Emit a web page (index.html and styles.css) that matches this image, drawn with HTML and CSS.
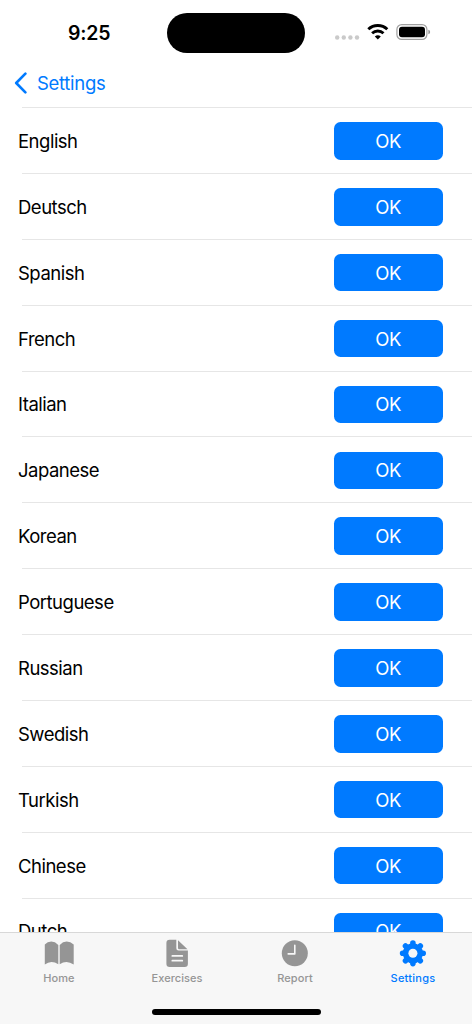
FILE: index.html
```html
<!DOCTYPE html>
<html lang="en">
<head>
<meta charset="utf-8">
<title>Settings</title>
<link rel="stylesheet" href="styles.css">
</head>
<body>
<div class="screen">
  <header class="status">
    <time class="clock">9:25</time>
    <div class="island"></div>
    <svg class="indicators" width="98" height="20" viewBox="0 0 98 20">
      <g fill="#cacaca"><circle cx="3.2" cy="14.5" r="2.2"/><circle cx="9.8" cy="14.5" r="2.2"/><circle cx="16.4" cy="14.5" r="2.2"/><circle cx="23" cy="14.5" r="2.2"/></g>
      <g fill="none" stroke="#000" stroke-width="2.9">
        <path d="M34.3 6.3a13.8 13.8 0 0 1 19 0"/>
        <path d="M38.1 10.2a8.4 8.4 0 0 1 11.4 0"/>
      </g>
      <path d="M43.8 16.6l-3-3a4.4 4.4 0 0 1 6 0z"/>
      <rect x="62.9" y="1.6" width="30" height="14.8" rx="4.8" fill="none" stroke="#a0a0a0" stroke-width="1.2"/>
      <rect x="65" y="3.8" width="26" height="10.4" rx="3"/>
      <path d="M94.4 6.7q1.7.5 1.7 2.3t-1.7 2.3z" fill="#909090"/>
    </svg>
  </header>
  <nav class="navbar">
    <svg width="14" height="22" viewBox="0 0 14 22"><path d="M11.4 1.7L2.2 11l9.2 9.3" fill="none" stroke="#007aff" stroke-width="2.6" stroke-linecap="round" stroke-linejoin="round"/></svg>
    <a class="back">Settings</a>
  </nav>
  <main class="list">
    <div class="row"><span>English</span><button class="ok">OK</button></div>
    <div class="row"><span>Deutsch</span><button class="ok">OK</button></div>
    <div class="row"><span>Spanish</span><button class="ok">OK</button></div>
    <div class="row"><span>French</span><button class="ok">OK</button></div>
    <div class="row"><span>Italian</span><button class="ok">OK</button></div>
    <div class="row"><span>Japanese</span><button class="ok">OK</button></div>
    <div class="row"><span>Korean</span><button class="ok">OK</button></div>
    <div class="row"><span>Portuguese</span><button class="ok">OK</button></div>
    <div class="row"><span>Russian</span><button class="ok">OK</button></div>
    <div class="row"><span>Swedish</span><button class="ok">OK</button></div>
    <div class="row"><span>Turkish</span><button class="ok">OK</button></div>
    <div class="row"><span>Chinese</span><button class="ok">OK</button></div>
    <div class="row"><span>Dutch</span><button class="ok">OK</button></div>
  </main>
  <footer class="tabbar">
    <div class="tabs">
      <div class="tab">
        <svg width="32" height="32" viewBox="0 0 32 32"><path fill="currentColor" d="M1.8 6.6Q4.5 3.6 8.3 3.6T15.3 6.9V26.3Q12 23.9 8.5 23.9T1.8 26.4ZM16.7 6.9Q19.9 3.6 23.7 3.6T30.7 6.6V26.4Q27 23.9 23.5 23.9T16.7 26.3Z"/></svg>
        <span>Home</span>
      </div>
      <div class="tab">
        <svg width="32" height="32" viewBox="0 0 32 32"><path fill="currentColor" d="M8.2 1.8H15.3V10.3Q15.3 12.6 17.6 12.6H26.9V25.8Q26.9 29 23.7 29H8.6Q5.4 29 5.4 25.8V4.9Q5.4 1.8 8.6 1.8ZM17 2.2L26.5 11.2H18.2Q17 11.2 17 10Z"/><path d="M11.3 17.9H21.3M11.3 22.7H21.3" stroke="#f7f7f7" stroke-width="1.7" stroke-linecap="round"/></svg>
        <span>Exercises</span>
      </div>
      <div class="tab">
        <svg width="32" height="32" viewBox="0 0 32 32"><circle cx="15.8" cy="15.3" r="13" fill="currentColor"/><path d="M15.8 7.3V15.9H9.2" fill="none" stroke="#f7f7f7" stroke-width="1.6" stroke-linecap="round" stroke-linejoin="round"/></svg>
        <span>Report</span>
      </div>
      <div class="tab active">
        <svg width="32" height="32" viewBox="0 0 32 32"><g transform="translate(15.9 15.3)"><path d="M0-10.3V10.3M-10.3 0H10.3M-7.4-7.4L7.4 7.4M7.4-7.4L-7.4 7.4" stroke="currentColor" stroke-width="5.6" stroke-linecap="round"/><circle r="10.1" fill="currentColor"/><circle r="4.5" fill="#f7f7f7"/></g></svg>
        <span>Settings</span>
      </div>
    </div>
    <div class="home-indicator"></div>
  </footer>
</div>
</body>
</html>
```
FILE: styles.css
```css
* { box-sizing: border-box; }
body { margin: 0; background: #fff; font-family: Inter, "Liberation Sans", sans-serif; }
.screen { width: 472px; height: 1024px; display: flex; flex-direction: column; overflow: hidden; }
.status { height: 60px; flex: none; display: grid; grid-template-columns: 167px 138px 1fr; padding-top: 12.5px; }
.clock { font-size: 19.5px; font-weight: 600; line-height: 40px; padding-left: 68px; letter-spacing: -0.2px; }
.island { height: 40.5px; border-radius: 21px; background: #000; }
.indicators { margin: 10.5px 0 0 28.5px; }
.navbar { height: 47px; flex: none; display: flex; align-items: center; padding: 0 0 1px 14px; gap: 9px; color: #007aff; }
.back { font-size: 18.5px; letter-spacing: -0.3px; }
.list { flex: 1; min-height: 0; overflow: hidden; }
.row { height: 65.88px; display: flex; align-items: center; justify-content: space-between; padding: 2px 29px 0 18px; font-size: 18.5px; letter-spacing: -0.5px; color: #000; background: linear-gradient(#e6e6e6, #e6e6e6) 22px 0 / 100% 1px no-repeat; }
.ok { width: 109.5px; height: 37.5px; padding: 0; border: 0; border-radius: 6.5px; background: #007aff; color: #fff; font: inherit; letter-spacing: -0.4px; }
.tabbar { height: 92px; flex: none; border-top: 1px solid #d8d8d8; background: #f7f7f7; display: flex; flex-direction: column; align-items: center; }
.tabs { width: 100%; height: 76px; display: grid; grid-template-columns: repeat(4, 1fr); }
.tab { display: flex; flex-direction: column; align-items: center; padding-top: 5px; color: #959595; font-size: 11px; font-weight: 500; line-height: 16px; letter-spacing: 0.05px; }
.active { color: #007aff; letter-spacing: 0.25px; }
.home-indicator { width: 169px; height: 5.5px; border-radius: 3px; background: #000; }
```
